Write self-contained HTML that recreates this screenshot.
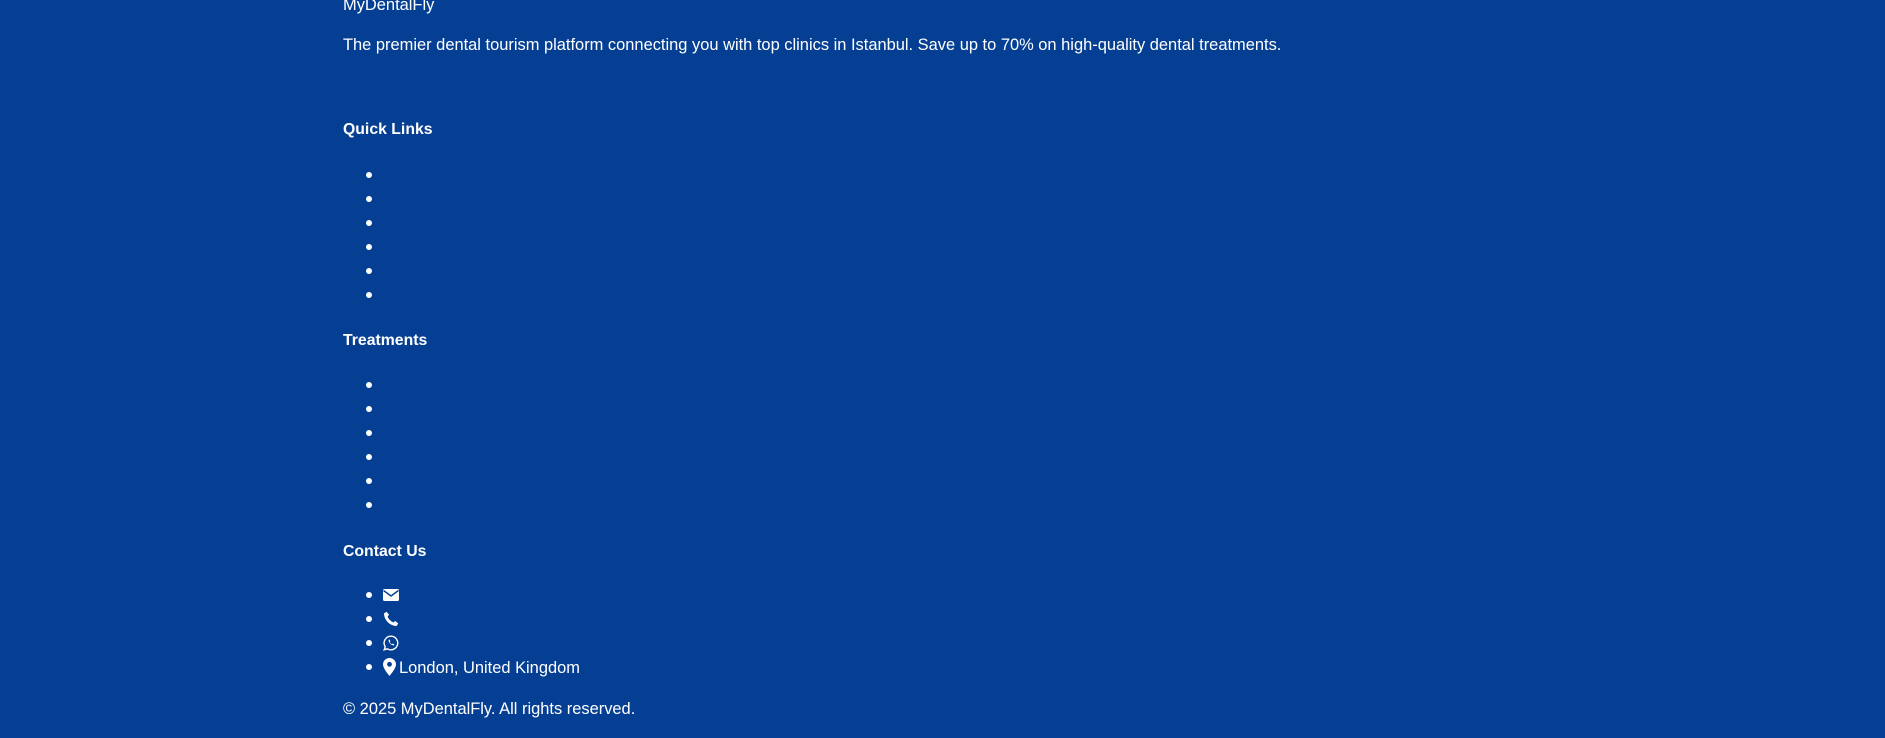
<!DOCTYPE html>
<html><head><meta charset="utf-8"><style>
html,body{margin:0;padding:0;width:1885px;height:738px;overflow:hidden;background:#053f93;color:#fff;font-family:"Liberation Sans",sans-serif;font-size:16.45px}
.t{position:absolute;left:343px;white-space:nowrap;line-height:24px}
.b{font-weight:bold;font-size:15.8px}
.d{position:absolute;left:366px;width:6px;height:6px;border-radius:50%;background:#fff}
svg{position:absolute;left:383px}
</style></head><body>
<div class="t" style="top:-7px">MyDentalFly</div>
<div class="t" style="top:33px">The premier dental tourism platform connecting you with top clinics in Istanbul. Save up to 70% on high-quality dental treatments.</div>
<div class="t b" style="top:118px">Quick Links</div>
<div class="d" style="top:172px"></div><div class="d" style="top:196px"></div><div class="d" style="top:220px"></div><div class="d" style="top:244px"></div><div class="d" style="top:268px"></div><div class="d" style="top:292px"></div>
<div class="t b" style="top:329px">Treatments</div>
<div class="d" style="top:382px"></div><div class="d" style="top:406px"></div><div class="d" style="top:430px"></div><div class="d" style="top:454px"></div><div class="d" style="top:478px"></div><div class="d" style="top:502px"></div>
<div class="t b" style="top:540px">Contact Us</div>
<div class="d" style="top:592px"></div><div class="d" style="top:616px"></div><div class="d" style="top:640px"></div><div class="d" style="top:664px"></div>
<svg style="top:588px" width="16" height="14" viewBox="0 0 16 14"><rect x="0" y="1" width="16" height="12" rx="1.5" fill="#fff"/><path d="M0.5 2.5 L8 8 L15.5 2.5" stroke="#053f93" stroke-width="1.4" fill="none"/></svg>
<svg style="top:611px" width="16" height="16" viewBox="0 0 16 16"><path d="M3.5 0.8 L6 3.6 L4.6 5.8 C5.5 8 7.8 10.3 10.2 11.4 L12.4 10 L15.2 12.5 L13.6 15 C7 15 1 9 1 2.4 Z" fill="#fff"/></svg>
<svg style="top:635px" width="16" height="16" viewBox="0 0 16 16"><path d="M8 1.2 A6.8 6.8 0 1 1 4.4 13.8 L1.2 14.8 L2.2 11.7 A6.8 6.8 0 0 1 8 1.2 Z" fill="none" stroke="#fff" stroke-width="1.4"/><path d="M5.6 4.8 C5.4 7.6 8 10.4 11 10.5 L11.2 9.3 L9.8 8.6 L9 9.3 C8 8.8 7.3 8.1 6.8 7.1 L7.4 6.3 L6.8 4.8 Z" fill="#fff"/></svg>
<svg style="top:658px" width="13" height="18" viewBox="0 0 13 18"><path d="M6.5 0 A6.5 6.5 0 0 1 13 6.5 C13 10.5 6.5 18 6.5 18 C6.5 18 0 10.5 0 6.5 A6.5 6.5 0 0 1 6.5 0 Z" fill="#fff"/><circle cx="6.5" cy="6.3" r="2.4" fill="#053f93"/></svg>
<div class="t" style="top:656px;left:399px">London, United Kingdom</div>
<div class="t" style="top:697px">© 2025 MyDentalFly. All rights reserved.</div>
</body></html>
